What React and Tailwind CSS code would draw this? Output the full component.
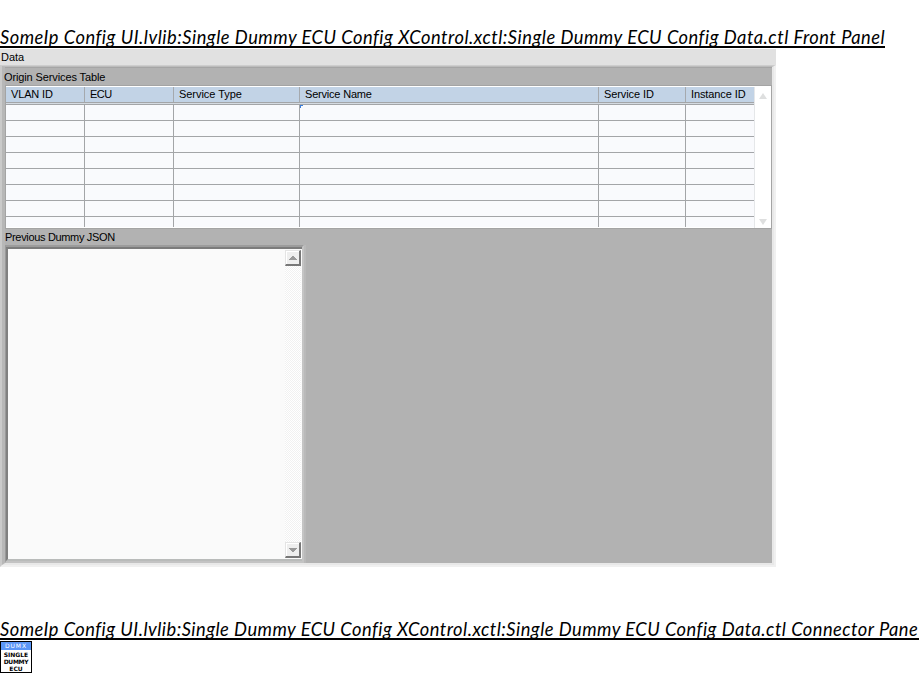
import React from 'react';

const columns = [
  { label: 'VLAN ID', width: 'w-[79px]', track: 'tracking-[-0.15px]' },
  { label: 'ECU', width: 'w-[89px]', track: 'tracking-[-0.5px]' },
  { label: 'Service Type', width: 'w-[126px]', track: 'tracking-[-0.05px]' },
  { label: 'Service Name', width: 'w-[299px]', track: 'tracking-[-0.2px]' },
  { label: 'Service ID', width: 'w-[87px]', track: 'tracking-[-0.1px]' },
  { label: 'Instance ID', width: 'w-[68px]', track: 'tracking-[-0.1px]' },
];

function Heading({ children, width }) {
  return (
    <h1 className={`h-[48px] overflow-hidden border-b-2 border-black pt-[25px] whitespace-nowrap font-[Lato,sans-serif] text-[18.3px] leading-[25px] italic text-black ${width}`}>
      {children}
    </h1>
  );
}

function ScrollButton({ down }) {
  return (
    <div className="flex h-4 w-4 items-center justify-center border-t border-l border-r-2 border-b-2 border-t-[#e4e4e4] border-l-[#e4e4e4] border-r-[#777] border-b-[#777] bg-[#eee] shadow-[inset_1px_1px_#fff]">
      <svg className="shrink-0" width="8" height="4" viewBox="0 0 8 4" fill="#999" shapeRendering="crispEdges">
        <path d={down ? 'M0 0h8v1h-1v1h-1v1h-1v1h-2v-1h-1v-1h-1v-1h-1z' : 'M3 0h2v1h1v1h1v1h1v1h-8v-1h1v-1h1v-1h1z'} />
      </svg>
    </div>
  );
}

function ServicesTable() {
  return (
    <div className="flex h-[144px] w-[767px] border border-[#a4a4a4] bg-white pt-px">
      <div className="w-[748px]">
        <div className="flex h-[15px] bg-[#c2d3e6]">
          {columns.map((c, i) => (
            <div key={c.label} className={`${c.width} ${c.track} pl-[5px] whitespace-nowrap leading-[15px] ${i < 5 ? 'border-r border-[#a5a9ae]' : ''}`}>
              {c.label}
            </div>
          ))}
        </div>
        <div className="h-[3px] border-y border-[#a3a5a8] bg-[#d5dbe2]" />
        <div>
          {Array.from({ length: 8 }, (_, row) => (
            <div key={row} className={`flex bg-[#f9fafd] ${row < 7 ? 'h-4 border-b border-[#a3a5a8]' : 'h-[10px]'}`}>
              {columns.map((c, i) => (
                <div key={c.label} className={`${c.width} ${i < 5 ? 'border-r border-[#a3a5a8]' : ''}`}>
                  {row === 0 && i === 3 && <div className="h-[3px] w-[3px] border-t border-l border-[#3b7edb]" />}
                </div>
              ))}
            </div>
          ))}
        </div>
      </div>
      <div className="flex w-[17px] flex-col items-center justify-between border-l border-[#e5e7e9] pt-[6px] pb-[3px]">
        <svg width="8" height="6" viewBox="0 0 8 6" fill="#dedfdf"><path d="M4 0l4 6H0z" /></svg>
        <svg width="8" height="6" viewBox="0 0 8 6" fill="#dedfdf"><path d="M0 0h8L4 6z" /></svg>
      </div>
    </div>
  );
}

function JsonBox() {
  return (
    <div className="h-[318px] w-[301px] border-r-2 border-[#b9b9b9]">
      <div className="h-[318px] w-[299px] border-t-2 border-r-2 border-b-2 border-l border-t-[#9c9c9c] border-r-[#c4c4c4] border-b-[#c3c3c3] border-l-[#999]">
        <div className="h-full border-t-2 border-b-2 border-l-2 border-t-[#7c7c7c] border-b-[#b9bbba] border-l-[#808080] bg-[#fafafa]">
          <div className="flex h-full justify-end p-px">
            <div className="flex w-4 flex-col justify-between bg-[conic-gradient(#f1f1f1_25%,#fff_0_50%,#f1f1f1_0_75%,#fff_0)] bg-[length:2px_2px]">
              <ScrollButton />
              <ScrollButton down />
            </div>
          </div>
        </div>
      </div>
    </div>
  );
}

function ConnectorIcon() {
  return (
    <div className="mt-px flex h-8 w-8 flex-col overflow-hidden border border-black bg-white text-center font-[DejaVu_Sans,sans-serif] text-[6px] leading-[7px] font-bold whitespace-nowrap">
      <div className="h-2 shrink-0 bg-[#5b96f7] leading-[8px] font-normal tracking-[0.9px] text-white">DUMX</div>
      <div className="pt-[1px] tracking-[0px]">SINGLE</div>
      <div className="-mx-1 tracking-[-0.3px]">DUMMY</div>
      <div>ECU</div>
    </div>
  );
}

export default function App() {
  return (
    <div className="h-[698px] w-[919px] overflow-hidden bg-white font-[Liberation_Sans,Arial,sans-serif] text-[11px] text-black">
      <Heading width="w-[885px]">
        <span className="tracking-[0.5px]">SomeIp Config UI.lvlib:Single Dummy ECU Config XControl.xctl:Single Dummy ECU Config Data.ctl Front Panel</span>
      </Heading>
      <section className="mt-px h-[518px] w-[776px] bg-[#e1e1e1]">
        <div className="h-4 pl-px leading-[16px]">Data</div>
        <div className="h-[502px] border-t border-r-2 border-b-2 border-l-2 border-t-[#cdcdcd] border-r-[#f0f0f0] border-b-[#f0f0f0] border-l-[#cacaca]">
          <div className="h-full border-t border-r-2 border-b-2 border-l-3 border-t-[#bcbcbc] border-r-[#e8e8e8] border-b-[#e8e8e8] border-l-[#b7b7b7] bg-[#b2b2b2]">
            <div className="h-[18px] border-t border-[#a5a5a5] leading-[18px] tracking-[-0.12px]">
              <span className="-ml-px">Origin Services Table</span>
            </div>
            <ServicesTable />
            <div className="h-4 leading-[16px] tracking-[-0.33px]">Previous Dummy JSON</div>
            <JsonBox />
          </div>
        </div>
      </section>
      <div className="mt-[25px]">
        <Heading width="w-[919px]">
          <span className="tracking-[0.475px]">SomeIp Config UI.lvlib:Single Dummy ECU Config XControl.xctl:Single Dummy ECU Config Data.ctl Connector Pane</span>
        </Heading>
      </div>
      <ConnectorIcon />
    </div>
  );
}
